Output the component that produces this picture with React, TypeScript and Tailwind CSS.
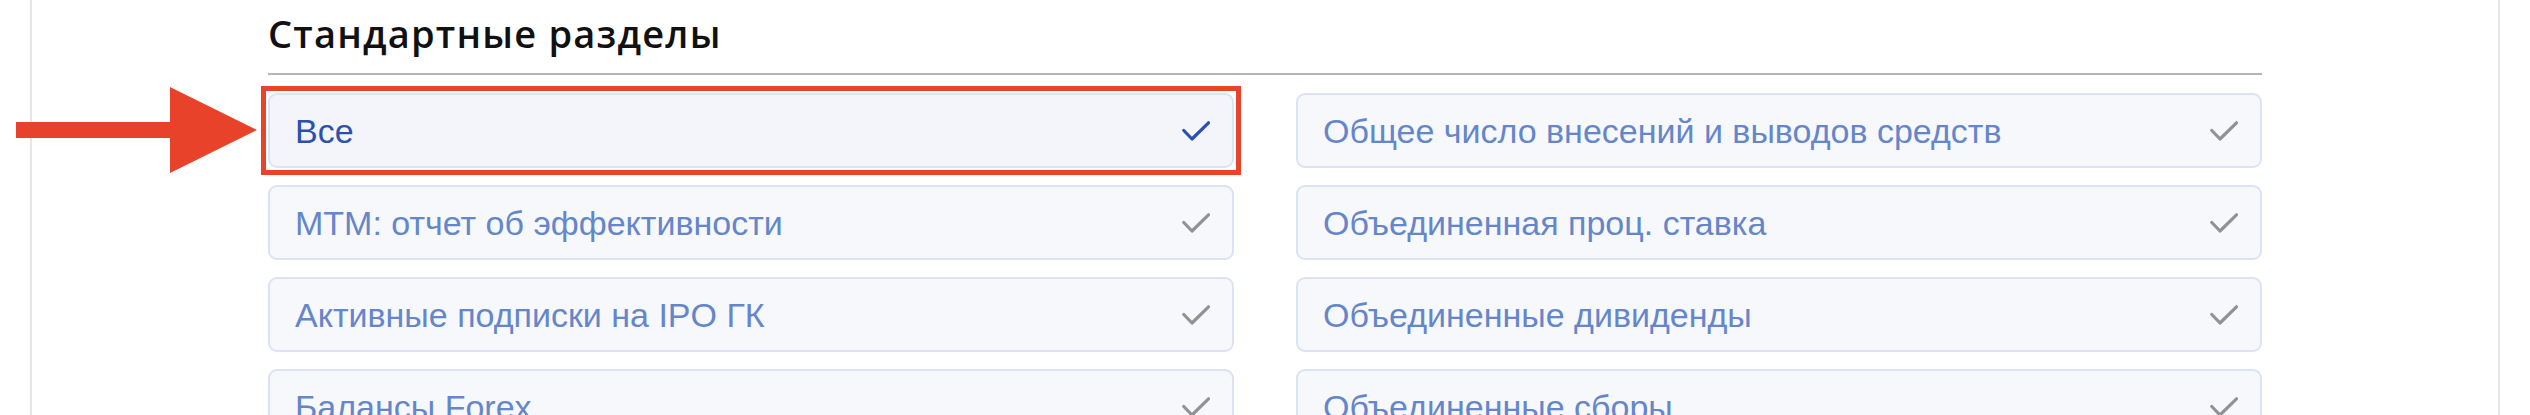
import React from "react";

type Section = { label: string; selected?: boolean };

const left: Section[] = [
  { label: "Все", selected: true },
  { label: "МТМ: отчет об эффективности" },
  { label: "Активные подписки на IPO ГК" },
  { label: "Балансы Forex" },
];

const right: Section[] = [
  { label: "Общее число внесений и выводов средств" },
  { label: "Объединенная проц. ставка" },
  { label: "Объединенные дивиденды" },
  { label: "Объединенные сборы" },
];

function Check({ color }: { color: string }) {
  return (
    <svg width="28" height="20" viewBox="0 0 28 20" fill="none">
      <polyline
        points="1.8,9.5 10,18 26.5,1.8"
        stroke={color}
        strokeWidth="3.2"
        strokeLinecap="round"
        strokeLinejoin="round"
      />
    </svg>
  );
}

function Item({ s }: { s: Section }) {
  return (
    <div className="relative">
      <div
        className={`flex h-[75px] items-center justify-between rounded-[9px] border-2 border-[#dbe3f4] pl-[25px] pr-[22px] ${
          s.selected ? "bg-[#f3f5fb]" : "bg-[#f7f8fc]"
        }`}
      >
        <span
          className={`text-[34px] leading-none ${
            s.selected ? "text-[#2c50ae]" : "text-[#6586ca]"
          }`}
        >
          {s.label}
        </span>
        <Check color={s.selected ? "#2c50ae" : "#929292"} />
      </div>
      {/* red highlight frame */}
      {s.selected && (
        <span className="pointer-events-none absolute -inset-[7px] border-[5px] border-[#e8442a]" />
      )}
    </div>
  );
}

export default function App() {
  const rows = left.map((l, i) => [l, right[i]]);
  return (
    <div className="relative h-[415px] overflow-hidden bg-white font-['Liberation_Sans',Arial,sans-serif]">
      <div className="ml-[30px] min-h-[415px] w-[2470px] border-x-2 border-[#e6e6e6] px-[236px] pt-[14px]">
        <h2 className="border-b-2 border-[#b5b5b5] pb-[21px] font-['Open_Sans',sans-serif] text-[38px] font-semibold leading-[38px] tracking-[1.2px] text-[#111111]">
          Стандартные разделы
        </h2>
        <div className="mt-[18px] grid grid-cols-2 gap-x-[62px] gap-y-[17px]">
          {rows.map(([l, r]) => (
            <React.Fragment key={l.label}>
              <Item s={l} />
              <Item s={r} />
            </React.Fragment>
          ))}
        </div>
      </div>

      {/* pointer arrow */}
      <svg
        className="absolute left-[16px] top-[87px]"
        width="241"
        height="86"
        viewBox="0 0 241 86"
      >
        <rect x="0" y="35" width="156" height="16" fill="#e8432a" />
        <polygon points="154,0 241,43 154,86" fill="#e8432a" />
      </svg>
    </div>
  );
}
